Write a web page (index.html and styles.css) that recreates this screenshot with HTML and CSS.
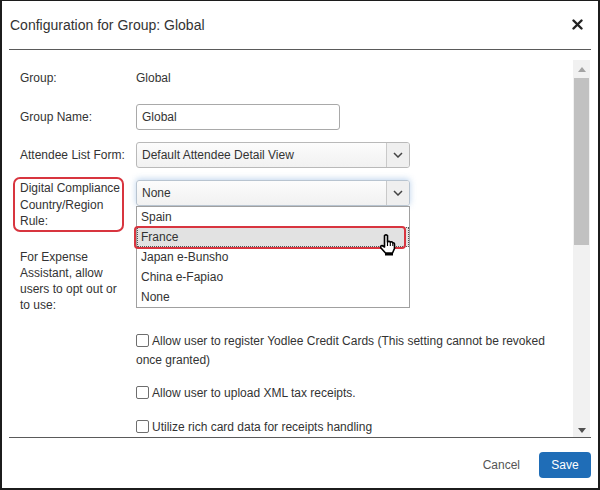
FILE: index.html
```html
<!DOCTYPE html>
<html>
<head>
<meta charset="utf-8">
<link rel="stylesheet" href="styles.css">
</head>
<body>
<div class="dialog">
  <div class="header">
    <div class="title">Configuration for Group: Global</div>
    <svg class="close" width="11" height="11" viewBox="0 0 11 11"><path d="M1.5 1.5 L9.5 9.5 M9.5 1.5 L1.5 9.5" stroke="#222" stroke-width="2.4" stroke-linecap="round"/></svg>
  </div>
  <div class="body">
    <div class="content">
      <div class="row r1">
        <div class="label">Group:</div>
        <div class="value text">Global</div>
      </div>
      <div class="row r2">
        <div class="label">Group Name:</div>
        <div class="value"><div class="input">Global</div></div>
      </div>
      <div class="row r3">
        <div class="label">Attendee List Form:</div>
        <div class="value">
          <div class="select"><span class="sel-text">Default Attendee Detail View</span><span class="sel-btn"><svg width="10" height="6" viewBox="0 0 10 6"><path d="M1 1 L5 5 L9 1" fill="none" stroke="#444" stroke-width="1.5"/></svg></span></div>
        </div>
      </div>
      <div class="row r4">
        <div class="label marked">Digital Compliance Country/Region Rule:<span class="mark-label"></span></div>
        <div class="value dd-wrap">
          <div class="select focus"><span class="sel-text">None</span><span class="sel-btn"><svg width="10" height="6" viewBox="0 0 10 6"><path d="M1 1 L5 5 L9 1" fill="none" stroke="#444" stroke-width="1.5"/></svg></span></div>
          <div class="dropdown">
            <div class="opt">Spain</div>
            <div class="opt hl">France</div>
            <div class="opt">Japan e-Bunsho</div>
            <div class="opt">China e-Fapiao</div>
            <div class="opt">None</div>
            <span class="mark-opt"></span>
            <svg class="cursor" width="17" height="22" viewBox="0 0 17 22"><path d="M5.5 1.5 Q7 0.3 8.5 1.5 L8.5 8 Q10 6.8 11.3 8 Q12.8 7.3 13.8 8.8 Q15.5 8.5 15.5 10.5 L15.5 14.5 L13.5 19 L6.5 19 L2 14 Q0.8 12 3 11.5 L5.5 13 Z" fill="#fff" stroke="#000" stroke-width="1.6" stroke-linejoin="round"/><path d="M6 19 L14 19 L14 21.5 L6 21.5 Z" fill="#000"/><path d="M8.5 8 L8.5 12 M11.3 8 L11.3 12 M13.8 8.8 L13.8 12" stroke="#000" stroke-width="1.1"/></svg>
          </div>
        </div>
      </div>
      <div class="row r5">
        <div class="label">For Expense Assistant, allow users to opt out or to use:</div>
        <div class="value"></div>
      </div>
      <div class="checks">
        <p class="check c1"><span class="box"></span>Allow user to register Yodlee Credit Cards (This setting cannot be revoked once granted)</p>
        <p class="check c2"><span class="box"></span>Allow user to upload XML tax receipts.</p>
        <p class="check c3"><span class="box"></span>Utilize rich card data for receipts handling</p>
      </div>
    </div>
    <div class="scrollbar">
      <div class="sb-up"><svg width="8" height="5" viewBox="0 0 8 5"><path d="M0 5 L4 0 L8 5 Z" fill="#a3a3a3"/></svg></div>
      <div class="sb-thumb"></div>
      <div class="sb-track"></div>
      <div class="sb-down"><svg width="8" height="5" viewBox="0 0 8 5"><path d="M0 0 L8 0 L4 5 Z" fill="#505050"/></svg></div>
    </div>
  </div>
  <div class="footer">
    <span class="cancel">Cancel</span>
    <span class="save">Save</span>
  </div>
</div>
</body>
</html>
```

FILE: styles.css
```css
* { box-sizing: border-box; }
html, body { margin: 0; padding: 0; background: #fff; }
body { font-family: "Liberation Sans", Arial, sans-serif; font-size: 12px; color: #333; }

.dialog {
  width: 600px;
  height: 490px;
  border: 2px solid #1c1c1c;
  border-top-width: 1px;
  display: flex;
  flex-direction: column;
  background: #fff;
}

.header {
  height: 49px;
  margin: 0 7px;
  padding: 0 8px 0 1px;
  border-bottom: 1px solid #5a5a5a;
  display: flex;
  align-items: center;
  justify-content: space-between;
  flex: none;
}
.title { font-size: 14px; color: #333; }
.close { display: block; margin-top: -1px; }

.body {
  height: 388px;
  margin: 0 7px;
  border-bottom: 1px solid #5a5a5a;
  display: flex;
  flex: none;
}
.content {
  flex: 1;
  overflow: hidden;
  padding: 20px 0 0 11px;
}

.row { display: flex; align-items: center; }
.label { width: 116px; flex: none; padding-right: 11px; line-height: 16px; color: #333; }
.value { flex: 1; }
.text { line-height: 16px; }

.r2 { margin-top: 18px; }
.r3 { margin-top: 12px; }
.r4 { margin-top: 12px; align-items: flex-start; }
.r4 .label { line-height: 16.5px; }
.r5 { margin-top: 19px; align-items: flex-start; }

.input {
  width: 204px;
  height: 26px;
  border: 1px solid #a9a9a9;
  border-radius: 3px;
  padding: 0 5px;
  line-height: 24px;
  background: #fff;
}

.select {
  width: 274px;
  height: 26px;
  border: 1px solid #b9b9b9;
  border-radius: 3px;
  background: linear-gradient(#fcfcfc, #f1f1f1);
  display: flex;
  align-items: stretch;
}
.select.focus {
  border-color: #b8c4d0;
  box-shadow: 0 -1px 6px rgba(110, 160, 215, 0.45);
}
.sel-text { flex: 1; padding-left: 5px; line-height: 24px; }
.sel-btn {
  width: 23px;
  border-left: 1px solid #c9c9c9;
  background: #efefef;
  display: flex;
  align-items: center;
  justify-content: center;
  border-radius: 0 2px 2px 0;
}
.sel-btn svg { display: block; }

.marked { position: relative; }
.mark-label {
  position: absolute;
  left: -7px;
  top: -3px;
  width: 111px;
  height: 55px;
  border: 2px solid #d8353f;
  border-radius: 7px;
}

.dd-wrap { position: relative; }
.dropdown {
  position: absolute;
  left: 0;
  top: 26px;
  width: 274px;
  height: 102px;
  border: 1px solid #a0a0a0;
  background: #fff;
}
.opt { height: 20px; line-height: 20px; padding-left: 4px; color: #333; }
.opt.hl { background: #e2e2e2; outline: 1px dotted #555; outline-offset: -1px; }
.mark-opt {
  position: absolute;
  left: -3px;
  top: 19px;
  width: 272px;
  height: 23px;
  border: 2px solid #d8353f;
  border-radius: 4px;
}
.cursor { position: absolute; left: 242px; top: 27px; }

.checks { padding-left: 116px; padding-top: 19px; }
.check {
  margin: 0;
  width: 434px;
  line-height: 19px;
  color: #333;
}
.check + .check { margin-top: 14px; }
.check.c3 { margin-top: 15px; }
.box {
  display: inline-block;
  width: 13px;
  height: 13px;
  border: 1px solid #6e6e6e;
  border-radius: 2px;
  vertical-align: -2px;
  margin-right: 3px;
  background: #fff;
}

.scrollbar {
  width: 17px;
  margin: 10px 1px 0 0;
  background: #f1f1f1;
  display: flex;
  flex-direction: column;
  flex: none;
}
.sb-up { height: 18px; display: flex; align-items: center; justify-content: center; }
.sb-up svg, .sb-down svg { display: block; }
.sb-thumb { height: 167px; margin: 0 1px; background: #c1c1c1; }
.sb-track { flex: 1; }
.sb-down { height: 9px; display: flex; align-items: flex-start; justify-content: center; }

.footer {
  flex: 1;
  display: flex;
  align-items: center;
  justify-content: flex-end;
  padding: 4px 7px 0 0;
}
.cancel { color: #555; font-size: 12px; margin-right: 19px; }
.save {
  width: 52px;
  height: 26px;
  border-radius: 4px;
  background: #1f6db7;
  color: #fff;
  font-size: 12px;
  display: flex;
  align-items: center;
  justify-content: center;
}
```
